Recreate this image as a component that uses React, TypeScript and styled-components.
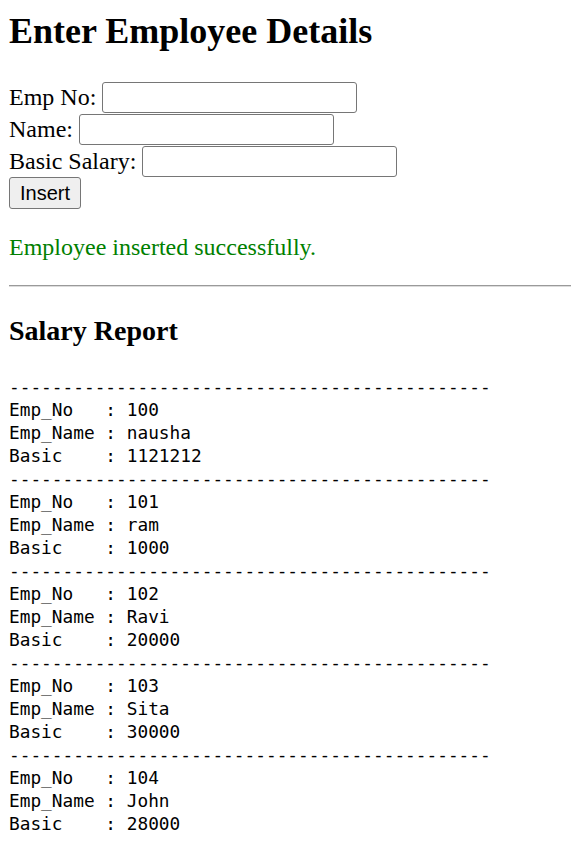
import React from 'react';
import styled, { createGlobalStyle } from 'styled-components';

const GlobalStyle = createGlobalStyle`
  body {
    margin: 0;
    background: #fff;
    color: #000;
    font-family: 'Liberation Serif', 'Times New Roman', serif;
    font-size: 24px;
  }
`;

const Page = styled.div`
  padding: 10px 0 0 9px;
`;

const Title = styled.h1`
  font-size: 36px;
  font-weight: bold;
  margin: 0 0 29px;
  line-height: normal;
`;

const Form = styled.form`
  display: flex;
  flex-direction: column;
  align-items: flex-start;
`;

const Row = styled.div`
  display: flex;
  align-items: center;
  gap: 6px;
  height: 32px;
`;

const Input = styled.input`
  box-sizing: border-box;
  width: 255px;
  height: 31px;
  border: 1px solid #767676;
  border-radius: 3px;
  padding: 1px 3px;
  font-size: 20px;
  font-family: 'Liberation Sans', Arial, sans-serif;
  background: #fff;
`;

const Button = styled.button`
  box-sizing: border-box;
  height: 32px;
  padding: 0 10px;
  border: 1px solid #767676;
  border-radius: 3px;
  background: #efefef;
  font-family: 'Liberation Sans', Arial, sans-serif;
  font-size: 20px;
  color: #000;
`;

const Message = styled.p`
  color: #008000;
  margin: 25px 0 24px;
`;

const Rule = styled.hr`
  margin: 0;
  height: 0;
  border: none;
  border-top: 1px solid #9a9a9a;
  border-bottom: 1px solid #dcdcdc;
`;

const SubTitle = styled.h2`
  font-size: 28px;
  font-weight: bold;
  margin: 28px 0;
`;

const Report = styled.pre`
  margin: 0;
  font-family: 'DejaVu Sans Mono', 'Liberation Mono', monospace;
  font-size: 17.8px;
  line-height: 23px;
`;

type Employee = { no: number; name: string; basic: number };

const employees: Employee[] = [
  { no: 100, name: 'nausha', basic: 1121212 },
  { no: 101, name: 'ram', basic: 1000 },
  { no: 102, name: 'Ravi', basic: 20000 },
  { no: 103, name: 'Sita', basic: 30000 },
  { no: 104, name: 'John', basic: 28000 },
];

const divider = '-'.repeat(45);

const report = employees
  .map(
    (e) =>
      `${divider}\nEmp_No   : ${e.no}\nEmp_Name : ${e.name}\nBasic    : ${e.basic}`
  )
  .join('\n');

const App: React.FC = () => (
  <Page>
    <GlobalStyle />
    <Title>Enter Employee Details</Title>
    <Form onSubmit={(ev) => ev.preventDefault()}>
      <Row>
        <span>Emp No:</span>
        <Input type="text" />
      </Row>
      <Row>
        <span>Name:</span>
        <Input type="text" />
      </Row>
      <Row>
        <span>Basic Salary:</span>
        <Input type="text" />
      </Row>
      <Button type="submit">Insert</Button>
    </Form>
    <Message>Employee inserted successfully.</Message>
    <Rule />
    <SubTitle>Salary Report</SubTitle>
    <Report>{report}</Report>
  </Page>
);

export default App;
